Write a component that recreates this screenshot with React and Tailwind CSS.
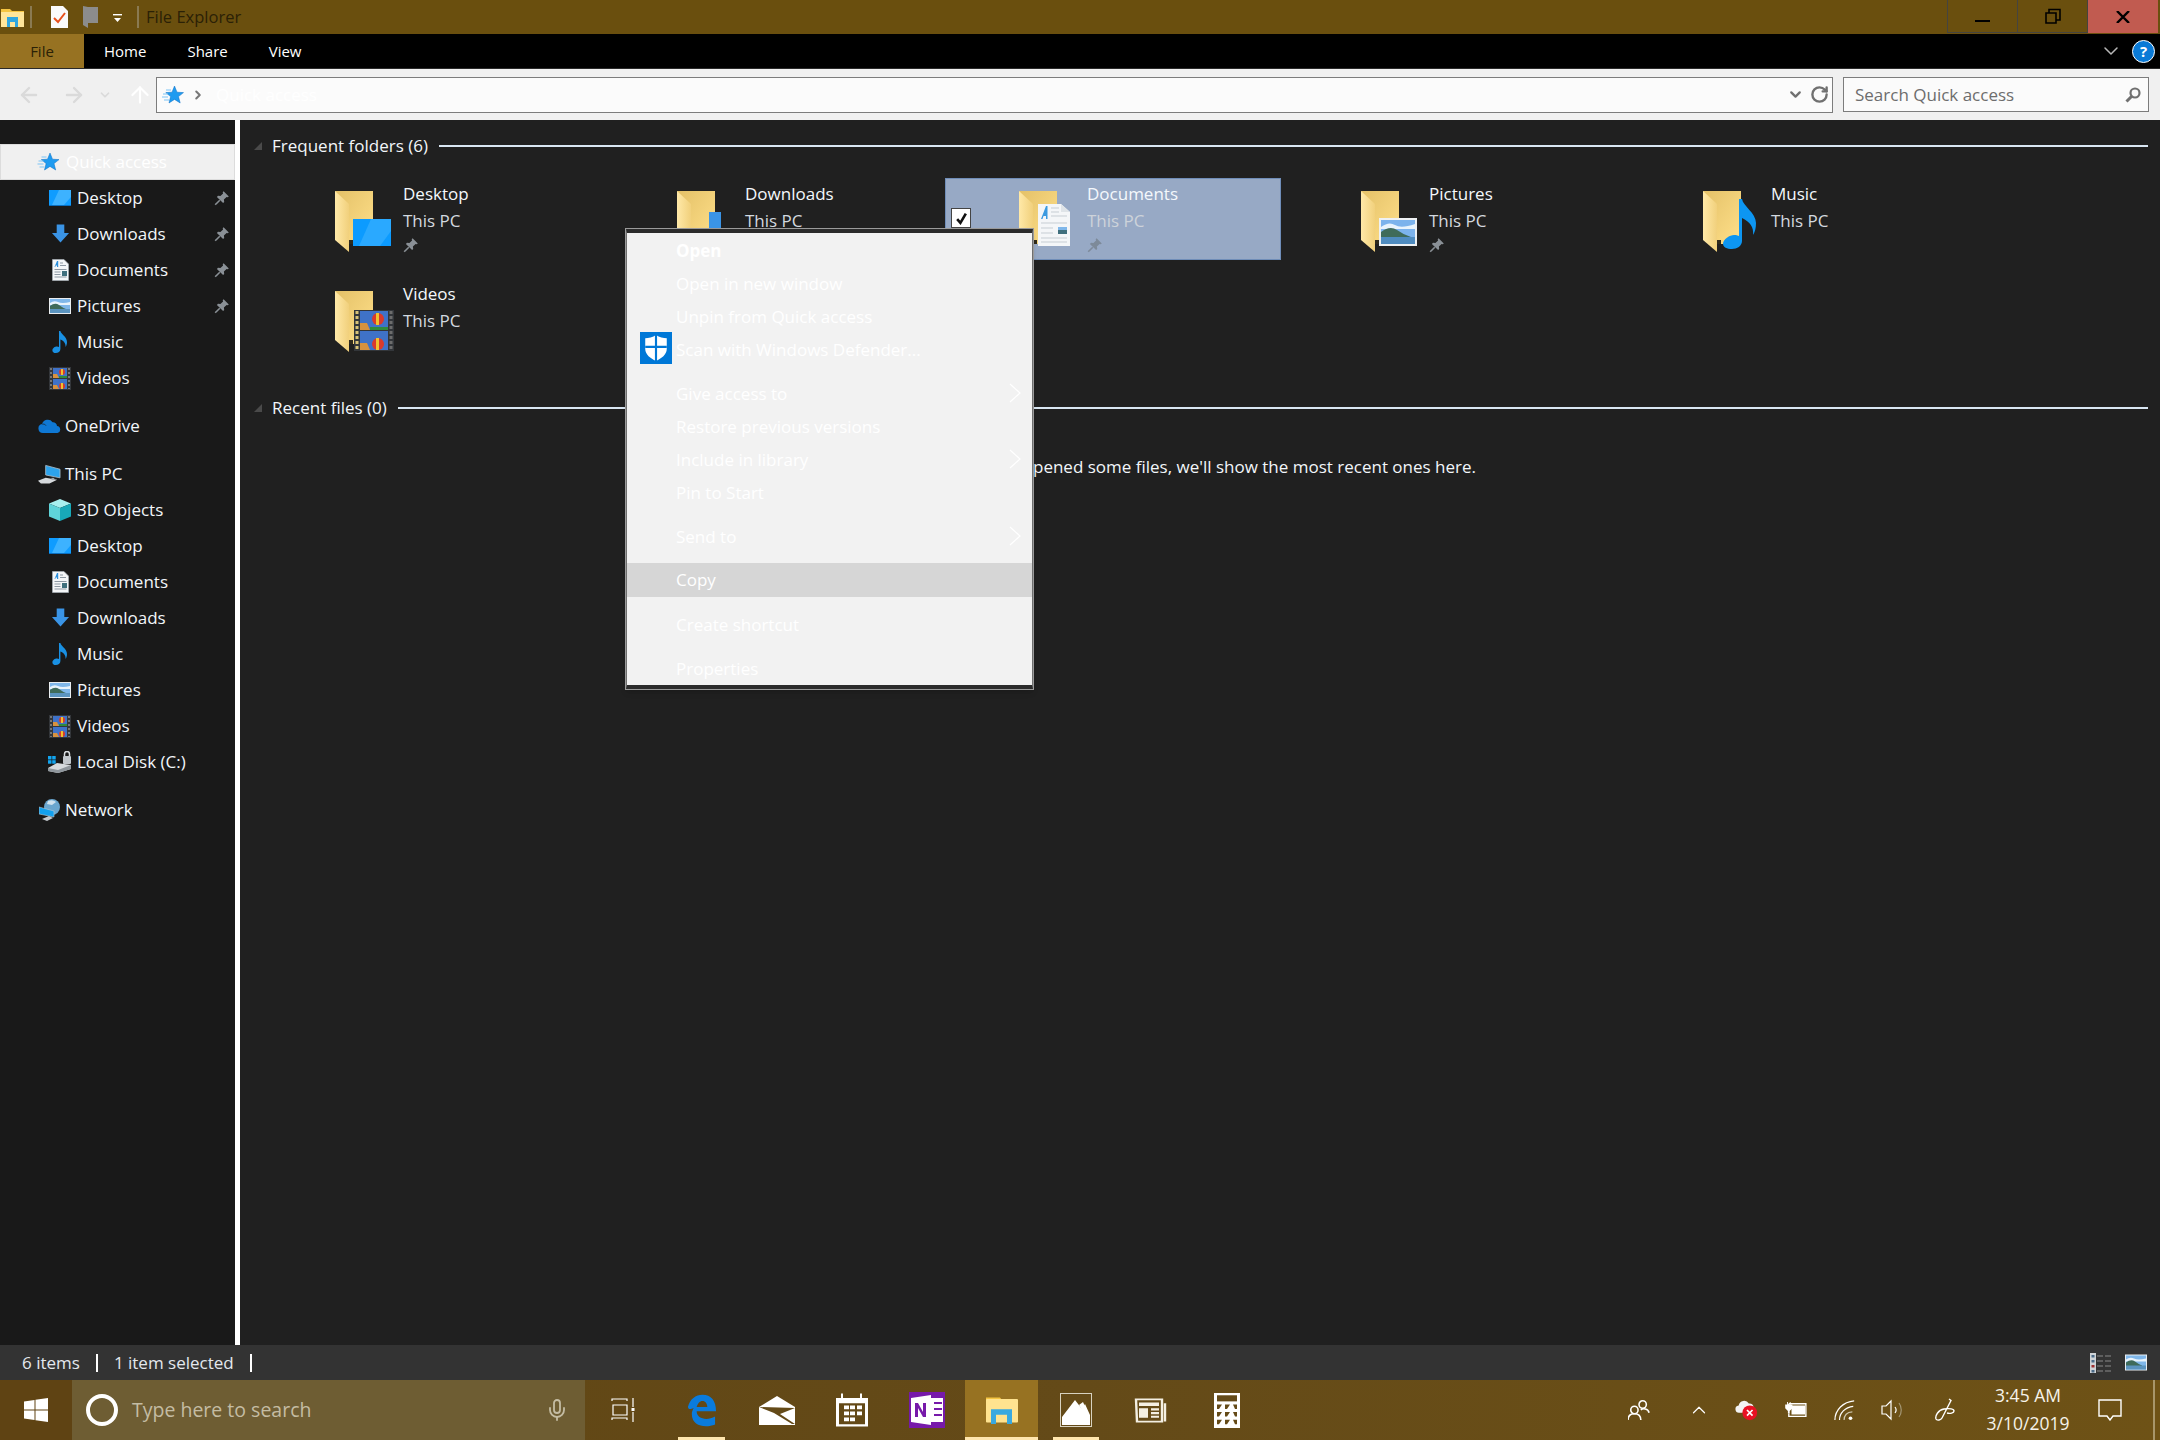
import { ChevronDown, ChevronRight, ChevronUp, RotateCw, ArrowLeft, ArrowRight, ArrowUp, Mic } from "lucide-react";

const Pin = ({ className = "", color = "#8a9096" }) => (
  <svg viewBox="0 0 16 16" className={className}>
    <path fill={color} d="M9.6 1.2 14.8 6.4 13.7 7.3 12.6 6.9 9.9 9.6 10.2 12 9.1 13.1 2.9 6.9 4 5.8 6.4 6.1 9.1 3.4 8.7 2.3Z" />
    <path stroke={color} strokeWidth="1.6" d="M5.8 10.2 1.2 14.8" />
  </svg>
);

const StarIcon = ({ className = "" }) => (
  <svg viewBox="0 0 22 20" className={className}>
    <path fill="#1e9bf0" stroke="#0d6fc4" strokeWidth=".5" d="M12.5 1 15 7.2 21.5 7.6 16.5 11.6 18.2 18 12.5 14.4 7 18 8.6 11.6 3.8 7.6 10 7.2Z" />
    <path stroke="#7cc4f5" strokeWidth="1" d="M1 9h5M0 12h6M2 15h5M4 5h5" />
  </svg>
);

const DesktopIcon = ({ className = "" }) => (
  <svg viewBox="0 0 22 16" className={className}>
    <rect width="22" height="16" fill="#0f9cff" />
    <path fill="#3db2ff" d="M10 0h12v7L15 15H3Z" />
    <rect y="15" width="22" height="1" fill="#0a6fc0" />
  </svg>
);

const DownIcon = ({ className = "" }) => (
  <svg viewBox="0 0 20 20" className={className}>
    <path fill="#3a94e6" d="M6 0h8v9h5l-9 10-9-10h5Z" />
  </svg>
);

const DocIcon = ({ className = "" }) => (
  <svg viewBox="0 0 17 22" className={className}>
    <path fill="#f4f6f8" stroke="#a9b0b8" strokeWidth=".7" d="M.5.5H12L16.5 5V21.5H.5Z" />
    <path fill="#2b8fdd" d="M2.5 8 5 2h1.2v6H5V6.5H3.8L3.2 8Z" />
    <path stroke="#8d98a3" d="M8 4h3M8 6.5h6M2.5 10.5h12M2.5 13h6M2.5 15.5h6M2.5 18h12" />
    <rect x="10" y="12" width="5" height="5" fill="#3f6f7d" />
  </svg>
);

const PicIcon = ({ className = "" }) => (
  <svg viewBox="0 0 22 16" className={className}>
    <rect width="22" height="16" fill="#e9edf0" />
    <rect x="1" y="1" width="20" height="14" fill="#7fb7ea" />
    <path fill="#e8f3fc" d="M1 5q4-3 8-1t12 0v3H1Z" />
    <path fill="#3f6b5a" d="M1 8q5-4 9-1t7 4v1H1Z" />
    <rect x="1" y="11" width="20" height="4" fill="#5b94bf" />
  </svg>
);

const NoteIcon = ({ className = "", color = "#1990e3" }) => (
  <svg viewBox="0 0 16 22" className={className}>
    <path fill={color} d="M7 0h1.4c.5 3 6.6 6 6.6 11 0 2-.6 3.6-1.4 5 .2-3-1.6-6.4-5.2-7.4V18c0 2.4-2.2 4-4.6 4C1.6 22 .4 20.8.4 19.4.4 17.2 3 15.6 5 15.6c.8 0 1.6.2 2 .4Z" />
  </svg>
);

const FilmIcon = ({ className = "" }) => (
  <svg viewBox="0 0 22 23" className={className}>
    <rect width="22" height="23" fill="#33363a" />
    <rect x="4" y="1" width="14" height="10" fill="#3f72c8" />
    <rect x="4" y="12" width="14" height="10" fill="#3f72c8" />
    <path fill="#d8923f" d="M4 7h4l2 4H4ZM4 18h4l2 4H4Z" />
    <circle cx="13" cy="5" r="3" fill="#d93a2b" />
    <path fill="#f0c22e" d="M12 2h2v6h-2Z" />
    <rect x="10" y="9" width="8" height="2" fill="#2f8a3c" />
    <circle cx="13" cy="19" r="3" fill="#d93a2b" />
    <path fill="#f0c22e" d="M12 16h2v6h-2Z" />
    <path stroke="#8c8c8c" strokeWidth="1.5" strokeDasharray="2 2" d="M2 1v21M20 1v21" />
  </svg>
);

const CloudIcon = ({ className = "" }) => (
  <svg viewBox="0 0 23 14" className={className}>
    <path fill="#0f78d4" d="M5 14a4.500 4.500 0 0 1-1-8.900A6 6 0 0 1 14.600 3.200 4 4 0 0 1 19 7.100 3.500 3.500 0 0 1 19.500 14Z" />
    <path fill="#0a5fa8" d="M4 5.100A6 6 0 0 1 5 5c1.500 0 2.500.8 3 1.500" stroke="#191919" strokeWidth=".6" />
  </svg>
);

const PcIcon = ({ className = "" }) => (
  <svg viewBox="0 0 24 21" className={className}>
    <path fill="#2da3ec" stroke="#b6c4cf" strokeWidth=".8" d="M8 1 23 5V14L8 11Z" />
    <path fill="#d5d9dc" d="M0 17 8 14 20 16 12 20H3Z" />
    <path fill="#9da4aa" d="M14 14h3v2h-3Z" />
  </svg>
);

const CubeIcon = ({ className = "" }) => (
  <svg viewBox="0 0 22 22" className={className}>
    <path fill="#a8f0ef" d="M11 0 22 4.500 11 9 0 4.500Z" />
    <path fill="#5fd4d9" d="M0 4.500 11 9V22L0 17.500Z" />
    <path fill="#18a9b8" d="M22 4.500 11 9V22L22 17.500Z" />
  </svg>
);

const DiskIcon = ({ className = "" }) => (
  <svg viewBox="0 0 24 22" className={className}>
    <rect x="0" y="5" width="3.500" height="3.500" fill="#12a5f0" />
    <rect x="4.200" y="5" width="3.500" height="3.500" fill="#12a5f0" />
    <rect x="0" y="9.200" width="3.500" height="3.500" fill="#12a5f0" />
    <rect x="4.200" y="9.200" width="3.500" height="3.500" fill="#12a5f0" />
    <path fill="#d7dbde" d="M0 17 9 12 23 14V18L10 22 0 20Z" />
    <path fill="#8f969c" d="M0 17 10 19 23 14V18L10 22 0 20Z" />
    <rect x="15" y="5" width="8" height="8" rx="1" fill="#c3c8cd" />
    <path fill="none" stroke="#d9dde0" strokeWidth="1.5" d="M16.500 5V3a2.500 2.500 0 0 1 5 0v2" />
  </svg>
);

const NetIcon = ({ className = "" }) => (
  <svg viewBox="0 0 22 22" className={className}>
    <circle cx="13" cy="8" r="8" fill="#6aa6cf" />
    <path fill="#cfe2ef" d="M9 2q5-2 8 1l-4 3-5-1Z" />
    <path fill="#12a0ee" stroke="#b7c7d2" strokeWidth=".6" d="M0 8 15 12V18L0 15Z" />
    <path fill="#c3c9ce" d="M3 20 10 17 14 19 8 22Z" />
  </svg>
);

function FolderLarge({ kind }) {
  return (
    <svg viewBox="0 0 60 64" className="w-[60px] h-[64px] shrink-0">
      <defs>
        <linearGradient id={`b-${kind}`} x1="0" y1="0" x2="1" y2="1">
          <stop offset="0" stopColor="#e4c168" />
          <stop offset="1" stopColor="#ffe08a" />
        </linearGradient>
        <linearGradient id={`f-${kind}`} x1="0" y1="0" x2="1" y2="0">
          <stop offset="0" stopColor="#ffe9a8" />
          <stop offset="1" stopColor="#f1d07c" />
        </linearGradient>
      </defs>
      <path fill={`url(#b-${kind})`} d="M0 1H38V54H14Z" />
      <path fill="#2f2a1c" d="M14 54H18V50H14Z" />
      <path fill={`url(#f-${kind})`} d="M0 1 14 14V62L0 50Z" />
      {kind === "desktop" && (
        <g>
          <rect x="18" y="29" width="38" height="27" fill="#0c9bff" />
          <path fill="#2aa9ff" d="M36 29H56V41L45 56H24Z" />
        </g>
      )}
      {kind === "downloads" && <path fill="#3a94e6" d="M32 22H44V42H52L38 60 24 42H32Z" />}
      {kind === "documents" && (
        <g transform="translate(19 14)">
          <path fill="#f4f6f8" d="M0 0H23L32 8V42H0Z" />
          <path fill="#dfe4e8" d="M23 0 32 8H23Z" />
          <path fill="#3b9ae0" d="M3 15 8 2h1.500v13H8v-3H5.500L4.500 15Z" />
          <path stroke="#c6cdd3" strokeWidth="1" d="M13 4h8M13 8h8M13 12h16M3 19h26M3 24h12M3 29h12M3 34h26M3 38h26" />
          <rect x="20" y="23" width="9" height="7" fill="#3f6f7d" />
          <rect x="20" y="23" width="9" height="3" fill="#7fb7ea" />
        </g>
      )}
      {kind === "pictures" && (
        <g transform="translate(18 28)">
          <rect width="38" height="28" fill="#eef1f3" />
          <rect x="2" y="2" width="34" height="24" fill="#7cb3ec" />
          <path fill="#e8f3fc" d="M2 9q8-6 14-2t20-1v5H2Z" />
          <path fill="#3f6b5a" d="M2 14q9-7 16-2t14 7v1H2Z" />
          <rect x="2" y="19" width="34" height="7" fill="#4f8cc0" />
        </g>
      )}
      {kind === "music" && (
        <path fill="#0d96f2" d="M36 9h3c1 7 14 14 14 24 0 5-1 9-3 12 1-8-3-13-11-17V51c0 5-5 8-10 8-5 0-9-2-9-5 0-5 7-9 11-9 2 0 4 .5 5 1Z" />
      )}
      {kind === "videos" && (
        <g transform="translate(19 20)">
          <rect width="40" height="41" fill="#33363a" />
          <rect x="6" y="1" width="28" height="19" fill="#3f72c8" />
          <rect x="6" y="21" width="28" height="19" fill="#3f72c8" />
          <path fill="#d8923f" d="M6 13h7l3 7H6ZM6 33h7l3 7H6Z" />
          <circle cx="24" cy="9" r="6" fill="#d93a2b" />
          <path fill="#f0c22e" d="M22 3h3v12h-3Z" />
          <rect x="16" y="17" width="18" height="3" fill="#2f8a3c" />
          <circle cx="24" cy="34" r="6" fill="#d93a2b" />
          <path fill="#f0c22e" d="M22 28h3v12h-3Z" />
          <path stroke="#d9c377" strokeWidth="3" strokeDasharray="3 2" d="M3 1v40" />
          <path stroke="#6c6c6c" strokeWidth="3" strokeDasharray="3 2" d="M37 1v40" />
        </g>
      )}
    </svg>
  );
}

const items = [
  { name: "Desktop", kind: "desktop", pinned: true },
  { name: "Downloads", kind: "downloads", pinned: true },
  { name: "Documents", kind: "documents", pinned: true, selected: true },
  { name: "Pictures", kind: "pictures", pinned: true },
  { name: "Music", kind: "music" },
  { name: "Videos", kind: "videos" },
];

function Tile({ item }) {
  const sel = item.selected;
  return (
    <div className={`relative h-[82px] w-[336px] flex pl-[73px] border ${sel ? "bg-[#97a9c5] border-[#6f8db8]" : "border-transparent"}`}>
      {sel && (
        <div className="absolute left-[5px] top-[29px] w-[20px] h-[20px] bg-white border border-[#444] flex items-center justify-center">
          <svg viewBox="0 0 12 12" className="w-[13px] h-[13px]"><path fill="none" stroke="#111" strokeWidth="2.400" d="M2 6.500 5 10 10 1.500" /></svg>
        </div>
      )}
      <div className="pt-[11px]"><FolderLarge kind={item.kind} /></div>
      <div className="ml-[8px] pt-[2px] text-[17px] leading-[26px]">
        <div className="text-[#f4f8fc] h-[27px]">{item.name}</div>
        <div className={sel ? "text-[#cdd3da]" : "text-[#d3d9df]"}>This PC</div>
        {item.pinned && <Pin className="w-[16px] h-[16px] mt-[3px]" color={sel ? "#7d8a99" : "#8a9096"} />}
      </div>
    </div>
  );
}

function NavRow({ icon, label, sub, pinned }) {
  return (
    <div className={`h-9 flex items-center ${sub ? "pl-[49px]" : "pl-[38px]"} text-[17px] text-[#f2f6fa] relative`}>
      <span className={`flex items-center justify-center shrink-0 ${sub ? "w-[22px] mr-[6px]" : "w-[23px] mr-[4px]"}`}>{icon}</span>
      {label}
      {pinned && <Pin className="w-[16px] h-[16px] absolute right-[5px] top-[10px]" />}
    </div>
  );
}

function Sidebar() {
  return (
    <div className="w-[235px] bg-[#191919] pt-[24px] shrink-0">
      <div className="h-9 flex items-center pl-[36px] bg-[#f0f0f0] border border-[#dcdcdc] text-[17px] text-white">
        <StarIcon className="w-[23px] h-[20px] mr-[6px]" />
        Quick access
      </div>
      <NavRow sub pinned label="Desktop" icon={<DesktopIcon className="w-[22px] h-[16px]" />} />
      <NavRow sub pinned label="Downloads" icon={<DownIcon className="w-[19px] h-[20px]" />} />
      <NavRow sub pinned label="Documents" icon={<DocIcon className="w-[17px] h-[22px]" />} />
      <NavRow sub pinned label="Pictures" icon={<PicIcon className="w-[22px] h-[16px]" />} />
      <NavRow sub label="Music" icon={<NoteIcon className="w-[16px] h-[22px]" />} />
      <NavRow sub label="Videos" icon={<FilmIcon className="w-[22px] h-[23px]" />} />
      <div className="mt-[12px]"><NavRow label="OneDrive" icon={<CloudIcon className="w-[23px] h-[14px]" />} /></div>
      <div className="mt-[12px]"><NavRow label="This PC" icon={<PcIcon className="w-[24px] h-[21px]" />} /></div>
      <NavRow sub label="3D Objects" icon={<CubeIcon className="w-[22px] h-[22px]" />} />
      <NavRow sub label="Desktop" icon={<DesktopIcon className="w-[22px] h-[16px]" />} />
      <NavRow sub label="Documents" icon={<DocIcon className="w-[17px] h-[22px]" />} />
      <NavRow sub label="Downloads" icon={<DownIcon className="w-[19px] h-[20px]" />} />
      <NavRow sub label="Music" icon={<NoteIcon className="w-[16px] h-[22px]" />} />
      <NavRow sub label="Pictures" icon={<PicIcon className="w-[22px] h-[16px]" />} />
      <NavRow sub label="Videos" icon={<FilmIcon className="w-[22px] h-[23px]" />} />
      <NavRow sub label="Local Disk (C:)" icon={<DiskIcon className="w-[24px] h-[22px] shrink-0" />} />
      <div className="mt-[12px]"><NavRow label="Network" icon={<NetIcon className="w-[22px] h-[22px]" />} /></div>
    </div>
  );
}

function Heading({ children }) {
  return (
    <div className="flex items-center h-[26px] pl-[14px] pr-[12px]">
      <svg viewBox="0 0 8 8" className="w-[8px] h-[8px] mr-[10px]"><path fill="#4a4a4a" d="M8 0V8H0Z" /></svg>
      <span className="text-[17px] text-[#f2f6fa] mr-[11px]">{children}</span>
      <div className="flex-1 h-[2px] bg-[#d9e6f2]" />
    </div>
  );
}

function MenuItem({ label, bold, arrow, hi, className = "", shield }) {
  return (
    <div className={`relative h-[33px] flex items-center pl-[49px] pr-[12px] text-[17px] text-white ${bold ? "font-bold" : ""} ${hi ? "bg-[#d6d6d6]" : ""} ${className}`}>
      {shield && (
        <div className="absolute left-[13px] top-[-1px] w-[32px] h-[32px] bg-[#0078d7] flex items-center justify-center">
          <svg viewBox="0 0 24 26" className="w-[26px] h-[28px]">
            <path fill="#fff" d="M12 1C9 3 5 4 2 4v10c0 5 5 9 10 11 5-2 10-6 10-11V4c-3 0-7-1-10-3Z" />
            <path stroke="#0078d7" strokeWidth="2" d="M12 1v24M2 12h20" />
          </svg>
        </div>
      )}
      <span>{label}</span>
      {arrow && (
        <svg viewBox="0 0 12 20" className="absolute right-[11px] top-[6px] w-[12px] h-[20px]"><path fill="none" stroke="#fff" strokeWidth="1.200" d="M1 1 11 10 1 19" /></svg>
      )}
    </div>
  );
}

function ContextMenu() {
  return (
    <div className="absolute left-[625px] top-[228px] w-[409px] h-[462px] z-10 border border-[#9a9a9a] shadow-md">
      <div className="h-full border-x border-x-[#6f6f6f] border-y-4 border-y-[#2b2b2b]">
        <div className="h-full bg-[#f2f2f2] pt-[1px]">
          <MenuItem bold label="Open" />
          <MenuItem label="Open in new window" />
          <MenuItem label="Unpin from Quick access" />
          <MenuItem shield label="Scan with Windows Defender..." />
          <MenuItem className="mt-[11px]" arrow label="Give access to" />
          <MenuItem label="Restore previous versions" />
          <MenuItem arrow label="Include in library" />
          <MenuItem label="Pin to Start" />
          <MenuItem className="mt-[11px]" arrow label="Send to" />
          <MenuItem className="mt-[10px] !h-[34px]" hi label="Copy" />
          <MenuItem className="mt-[11px]" label="Create shortcut" />
          <MenuItem className="mt-[11px]" label="Properties" />
        </div>
      </div>
    </div>
  );
}

function TitleBar() {
  return (
    <div className="h-[34px] bg-[#6a4f0e] flex items-center shrink-0">
      <svg viewBox="0 0 23 19" className="w-[23px] h-[19px] ml-[1px]">
        <path fill="#f5c542" d="M0 1h9l2 2h12v3H0Z" />
        <path fill="#ffe59a" d="M0 4h23v15H0Z" />
        <path fill="#2fa6e0" d="M6 9h11v10h-3v-5H9v5H6Z" />
      </svg>
      <div className="w-[2px] h-[22px] bg-[#8a7a52] ml-[6px]" />
      <svg viewBox="0 0 17 22" className="w-[17px] h-[22px] ml-[19px]">
        <path fill="#fafafa" d="M0 0H12L17 5V22H0Z" />
        <path fill="none" stroke="#e8501c" strokeWidth="2" d="M3 12 7 16 14 7" />
      </svg>
      <svg viewBox="0 0 15 22" className="w-[15px] h-[22px] ml-[15px]">
        <path fill="#8c8c8c" d="M0 0 5 1H15V17H5V22L0 19Z" />
      </svg>
      <svg viewBox="0 0 9 9" className="w-[9px] h-[9px] ml-[15px] mt-[3px]">
        <rect width="9" height="1.400" fill="#fff" />
        <path fill="#fff" d="M1 4H8L4.500 8Z" />
      </svg>
      <div className="w-[2px] h-[22px] bg-[#8a7a52] ml-[15px]" />
      <span className="ml-[7px] text-[16.5px] text-[#2b2106]">File Explorer</span>
      <div className="ml-auto flex h-[33px] self-start mr-[2px]">
        <div className="w-[71px] border border-[#45443f] border-t-0 flex items-center justify-center">
          <div className="w-[15px] h-[2px] bg-black mt-[9px]" />
        </div>
        <div className="w-[70px] border-b border-r border-[#45443f] flex items-center justify-center">
          <svg viewBox="0 0 16 16" className="w-[16px] h-[16px]"><path fill="none" stroke="#000" strokeWidth="1.600" d="M1 5h10v10H1ZM4 5V1.500h11V12h-4" /></svg>
        </div>
        <div className="w-[70px] bg-[#c15b50] flex items-center justify-center">
          <svg viewBox="0 0 14 12" className="w-[14px] h-[12px]"><path stroke="#000" strokeWidth="2.400" d="M1 0 13 12M13 0 1 12" /></svg>
        </div>
      </div>
    </div>
  );
}

function RibbonTabs() {
  return (
    <div className="h-[35px] bg-black border-b border-b-[#2a2a2a] flex items-center text-[15px] text-white shrink-0">
      <div className="w-[84px] h-full bg-[#977222] text-[#2b2106] flex items-center justify-center">File</div>
      <span className="ml-[20px]">Home</span>
      <span className="ml-[41px]">Share</span>
      <span className="ml-[41px]">View</span>
      <ChevronDown className="ml-auto w-[24px] h-[24px] text-[#b8b8b8]" strokeWidth={1.500} />
      <div className="ml-[9px] mr-[5px] w-[23px] h-[23px] rounded-full bg-[#0a7ad6] border border-white flex items-center justify-center text-[15px] font-bold text-white">?</div>
    </div>
  );
}

function AddressRow() {
  return (
    <div className="h-[51px] bg-[#f0f0f0] flex items-center text-[#dadada] shrink-0">
      <ArrowLeft className="w-[24px] h-[24px] ml-[17px]" strokeWidth={2.400} />
      <ArrowRight className="w-[24px] h-[24px] ml-[21px]" strokeWidth={2.400} />
      <ChevronDown className="w-[14px] h-[14px] ml-[12px]" strokeWidth={3} />
      <ArrowUp className="w-[26px] h-[26px] ml-[15px] text-white" strokeWidth={2} />
      <div className="ml-[3px] w-[676px] flex-1 h-[36px] bg-[#fbfbfb] border border-[#7c7c7c] flex items-center">
        <StarIcon className="w-[22px] h-[20px] ml-[5px]" />
        <ChevronRight className="w-[14px] h-[14px] ml-[7px] text-[#777]" strokeWidth={3.500} />
        <span className="ml-[11px] text-[17px] text-white">Quick access</span>
        <ChevronDown className="ml-auto w-[17px] h-[17px] text-[#707070]" strokeWidth={3.200} />
        <RotateCw className="w-[19px] h-[19px] ml-[6px] mr-[3px] text-[#707070]" strokeWidth={3} />
      </div>
      <div className="ml-[10px] mr-[11px] w-[306px] h-[35px] bg-[#fbfbfb] border border-[#7c7c7c] flex items-center pl-[11px] text-[17px] text-[#6d6d6d]">
        Search Quick access
        <svg viewBox="0 0 16 16" className="ml-auto mr-[7px] w-[16px] h-[16px]">
          <circle cx="10" cy="6" r="4.500" fill="none" stroke="#707070" strokeWidth="2.200" />
          <path stroke="#707070" strokeWidth="3" d="M6.500 9.500 1.500 14.500" />
        </svg>
      </div>
    </div>
  );
}

function StatusBar() {
  return (
    <div className="h-[35px] bg-[#333333] flex items-center text-[17px] text-[#e3e8ee] shrink-0">
      <span className="ml-[22px]">6 items</span>
      <div className="w-[2px] h-[18px] bg-white ml-[16px]" />
      <span className="ml-[16px]">1 item selected</span>
      <div className="w-[2px] h-[18px] bg-white ml-[16px]" />
      <svg viewBox="0 0 22 20" className="ml-auto w-[22px] h-[20px]">
        <rect x="0" width="6" height="20" fill="#cfd3d6" />
        <rect x="1.500" y="2" width="3" height="2.500" fill="#4b6b88" />
        <rect x="1.500" y="7" width="3" height="2.500" fill="#4b6b88" />
        <rect x="1.500" y="12" width="3" height="2.500" fill="#a03030" />
        <rect x="1.500" y="17" width="3" height="2.500" fill="#4b6b88" />
        <path stroke="#8a8a8a" strokeWidth="1.200" d="M7 3h6M15 3h6M7 8h6M15 8h6M7 13h6M15 13h6M7 18h6M15 18h6" />
      </svg>
      <PicIcon className="w-[22px] h-[17px] ml-[13px] mr-[13px]" />
    </div>
  );
}

function TaskSlot({ children, active, running, className = "" }) {
  return (
    <div className={`relative h-full flex items-center justify-center ${active ? "bg-[#977222]" : ""} ${className}`}>
      {children}
      {running && <div className={`absolute bottom-0 h-[3px] bg-[#ffe6ae] ${active ? "inset-x-0" : "inset-x-[7px]"}`} />}
    </div>
  );
}

function Taskbar() {
  return (
    <div className="h-[60px] bg-linear-to-r from-[#604513] via-[#644a18] to-[#6e5216] flex items-center shrink-0">
      <div className="w-[72px] h-full bg-[#5f4313] flex items-center justify-center">
        <svg viewBox="0 0 24 24" className="w-[24px] h-[24px]"><path fill="#fff" d="M0 3.500 10.500 2V11.500H0ZM11.500 1.800 24 0V11.500H11.500ZM0 12.500H10.500V22L0 20.500ZM11.500 12.500H24V24L11.500 22.200Z" /></svg>
      </div>
      <div className="w-[513px] h-full bg-[#6e5d33] flex items-center">
        <div className="ml-[14px] w-[32px] h-[32px] rounded-full border-[4px] border-white" />
        <span className="ml-[14px] text-[19.5px] text-[#c4bca3]">Type here to search</span>
        <Mic className="ml-auto mr-[16px] w-[24px] h-[26px] text-[#c4bca3]" strokeWidth={1.800} />
      </div>
      <div className="w-[76px] flex justify-center">
        <svg viewBox="0 0 24 24" className="w-[24px] h-[24px]">
          <path fill="none" stroke="#fff" strokeWidth="1.200" d="M1 3V1H16V3M2 7H16V17H2ZM1 22V20H16V22M22 0V9M22 14V24" />
          <rect x="20.500" y="10" width="3" height="3" fill="#fff" />
        </svg>
      </div>
      <TaskSlot running className="w-[61px] ml-[10px]">
        <svg viewBox="0 0 32 38" preserveAspectRatio="none" className="w-[31px] h-[33px]">
          <path fill="#0a7bdc" d="M2 15C4 6 10 1 17 1c9 0 14 7 14 19H11c0 9 11 11 19 6v9c-9 4-24 3-24-12 0-3 1-5 2-7-3 1-5 3-6-1Zm9 0h11c0-4-2-7-5-7-3 0-5 3-6 7Z" />
        </svg>
      </TaskSlot>
      <TaskSlot className="w-[61px] ml-[14px]">
        <svg viewBox="0 0 36 29" className="w-[36px] h-[29px]">
          <path fill="#fff" d="M0 11 18 0 36 11V29H0Z" />
          <path fill="#644a18" d="M0 11 36 12 21 18 36 28H33L15 17Z" />
        </svg>
      </TaskSlot>
      <TaskSlot className="w-[61px] ml-[14px]">
        <svg viewBox="0 0 32 48" preserveAspectRatio="none" className="w-[32px] h-[36px]">
          <path fill="#fff" d="M0 8H5V2H7V8H24V2H26V8H32V46H0ZM3 15V43H29V15Z" />
          <path fill="#fff" d="M8 18h5v5H8ZM14 18h5v5h-5ZM21 18h5v5h-5ZM8 26h5v5H8ZM14 26h5v5h-5ZM21 26h5v5h-5ZM8 34h5v5H8ZM14 34h5v5h-5Z" />
        </svg>
      </TaskSlot>
      <TaskSlot className="w-[61px] ml-[14px]">
        <svg viewBox="0 0 36 36" className="w-[36px] h-[36px]">
          <rect width="36" height="36" fill="#7719aa" />
          <rect x="22" y="6" width="12" height="24" fill="#fff" />
          <path fill="#7719aa" d="M25 10h8v2h-8ZM25 16h8v2h-8ZM25 22h8v2h-8Z" />
          <path fill="#fff" d="M2 6 22 3V33L2 30Z" />
          <path fill="#7719aa" d="M6 25V11H9L14 20V11H17V25H14L9 16V25Z" />
        </svg>
      </TaskSlot>
      <TaskSlot active running className="w-[73px] ml-[8px]">
        <svg viewBox="0 0 32 36" preserveAspectRatio="none" className="w-[32px] h-[28px]">
          <path fill="#f5c542" d="M0 2H14L16 5H0Z" />
          <rect y="4" width="32" height="30" rx="1" fill="#ffe38f" />
          <path fill="#39a9df" d="M5 17H26V36H21V24H10V36H5Z" />
        </svg>
      </TaskSlot>
      <TaskSlot running className="w-[60px] ml-[8px]">
        <svg viewBox="0 0 32 34" className="w-[32px] h-[34px]">
          <rect x=".5" y=".5" width="31" height="33" fill="none" stroke="#d8d2c0" />
          <path fill="#fff" d="M2 3H30V32H2Z" />
          <path fill="#644a18" d="M2 3H30V22L25 11 22 16 15 7 2 24Z" />
          <path fill="#fff" d="M19 12 26 24 28 20 23 9Z" />
        </svg>
      </TaskSlot>
      <TaskSlot className="w-[61px] ml-[14px]">
        <svg viewBox="0 0 34 34" preserveAspectRatio="none" className="w-[34px] h-[25px]">
          <path fill="none" stroke="#f4efe2" strokeWidth="2.400" d="M2 2H28V32H3ZM31 7V32" />
          <path fill="#f4efe2" d="M5 6H25V11H5ZM5 14H14V27H5ZM17 14H25V17H17ZM17 19H25V22H17ZM17 24H25V27H17Z" />
        </svg>
      </TaskSlot>
      <TaskSlot className="w-[61px] ml-[15px]">
        <svg viewBox="0 0 26 46" preserveAspectRatio="none" className="w-[26px] h-[35px]">
          <rect width="26" height="46" fill="#fff" />
          <rect x="3" y="3" width="20" height="8" fill="#644a18" />
          <path fill="#644a18" d="M3 15h5l-3 6H3ZM11 15h5l-3 6h-2ZM19 15h4v6h-2ZM3 25h5l-3 6H3ZM11 25h5l-3 6h-2ZM19 25h4v6h-2ZM3 35h5l-3 6H3ZM11 35h5l-3 6h-2ZM19 35h4v6h-2Z" />
        </svg>
      </TaskSlot>
      <div className="ml-auto flex items-center h-full text-white">
        <svg viewBox="0 0 24 24" className="w-[22px] h-[26px]">
          <g fill="none" stroke="#fff" strokeWidth="1.700">
            <circle cx="16" cy="6" r="4" /><circle cx="7" cy="12" r="4" />
            <path d="M0 23c0-5 3-7 7-7s7 2 7 7M14 12c2-2 8-2 9 3" />
          </g>
        </svg>
        <ChevronUp className="ml-[38px] w-[22px] h-[22px]" strokeWidth={1.300} />
        <svg viewBox="0 0 26 22" className="ml-[25px] w-[24px] h-[22px]">
          <path fill="#f3f3f3" d="M5 14a4 4 0 0 1-1-8A6 6 0 0 1 15 4a4 4 0 0 1 5 4H11v6Z" />
          <circle cx="16" cy="14" r="8" fill="#e81123" />
          <path stroke="#fff" strokeWidth="1.800" d="M13 11 19 17M19 11 13 17" />
        </svg>
        <svg viewBox="0 0 24 20" className="ml-[25px] w-[24px] h-[18px]">
          <path fill="none" stroke="#fff" strokeWidth="1.500" d="M4 3H23V17H4V14M4 9V3" />
          <rect x="7" y="5" width="15" height="10" fill="#fff" />
          <path fill="#fff" d="M0 4H2V1H3V4H5V1H6V4H8V8L5 11V14H3V11L0 8Z" />
        </svg>
        <svg viewBox="0 0 24 24" className="ml-[26px] w-[22px] h-[22px]">
          <g fill="none" stroke="#fff">
            <path d="M1 23C1 12 10 3 22 2" strokeWidth="1.300" />
            <path d="M6 23C6 15 12 9 21 8" strokeWidth="1.300" />
            <path d="M11 23C11 18 14 14 20 14" strokeWidth="1.300" stroke="#cfc8b0" />
          </g>
          <circle cx="18" cy="21" r="2" fill="#fff" />
        </svg>
        <svg viewBox="0 0 24 22" className="ml-[25px] w-[24px] h-[22px]">
          <path fill="none" stroke="#fff" strokeWidth="1.200" d="M1 7H5L10 2V20L5 15H1Z" />
          <path fill="none" stroke="#fff" strokeWidth="1.200" d="M14 8C15.500 10 15.500 12 14 14" />
          <path fill="none" stroke="#a39674" strokeWidth="1.200" d="M18 4C21 8 21 14 18 18" />
        </svg>
        <svg viewBox="0 0 20 24" className="ml-[30px] w-[20px] h-[24px]">
          <g fill="none" stroke="#fff" strokeWidth="1.400">
            <path d="M14 1 16 2.500 7 20C6 22 2 23 1 21 0 18 3 12 9 11 15 10 19 11 19 13 19 15 15 16 12 15" />
          </g>
        </svg>
        <div className="ml-[29px] w-[88px] text-center text-[17.5px] leading-[28px] text-[#f6f3ea] mt-[-3px]">
          <div>3:45 AM</div>
          <div>3/10/2019</div>
        </div>
        <svg viewBox="0 0 24 22" className="ml-[26px] w-[24px] h-[22px]">
          <path fill="none" stroke="#fff" strokeWidth="1.400" d="M1 1H23V17H15L12 21 9 17H1Z" />
        </svg>
        <div className="ml-[31px] w-[2px] h-full bg-[#a8966a]" />
        <div className="w-[5px]" />
      </div>
    </div>
  );
}

export default function App() {
  return (
    <div className="relative w-[2160px] h-[1440px] overflow-hidden flex flex-col bg-[#202020] [font-family:'Open_Sans',sans-serif]">
      <TitleBar />
      <RibbonTabs />
      <AddressRow />
      <div className="flex-1 flex min-h-0">
        <Sidebar />
        <div className="w-[5px] bg-white shrink-0" />
        <div className="flex-1 bg-[#202020] pt-[13px]">
          <Heading>Frequent folders (6)</Heading>
          <div className="grid grid-cols-[repeat(5,342px)] gap-y-[18px] pl-[21px] pt-[19px]">
            {items.map((it) => <Tile key={it.name} item={it} />)}
          </div>
          <div className="mt-[35px]"><Heading>Recent files (0)</Heading></div>
          <div className="mt-[33px] text-center text-[17px] text-[#f2f6fa]">
            After you've opened some files, we'll show the most recent ones here.
          </div>
        </div>
      </div>
      <StatusBar />
      <Taskbar />
      <ContextMenu />
    </div>
  );
}
